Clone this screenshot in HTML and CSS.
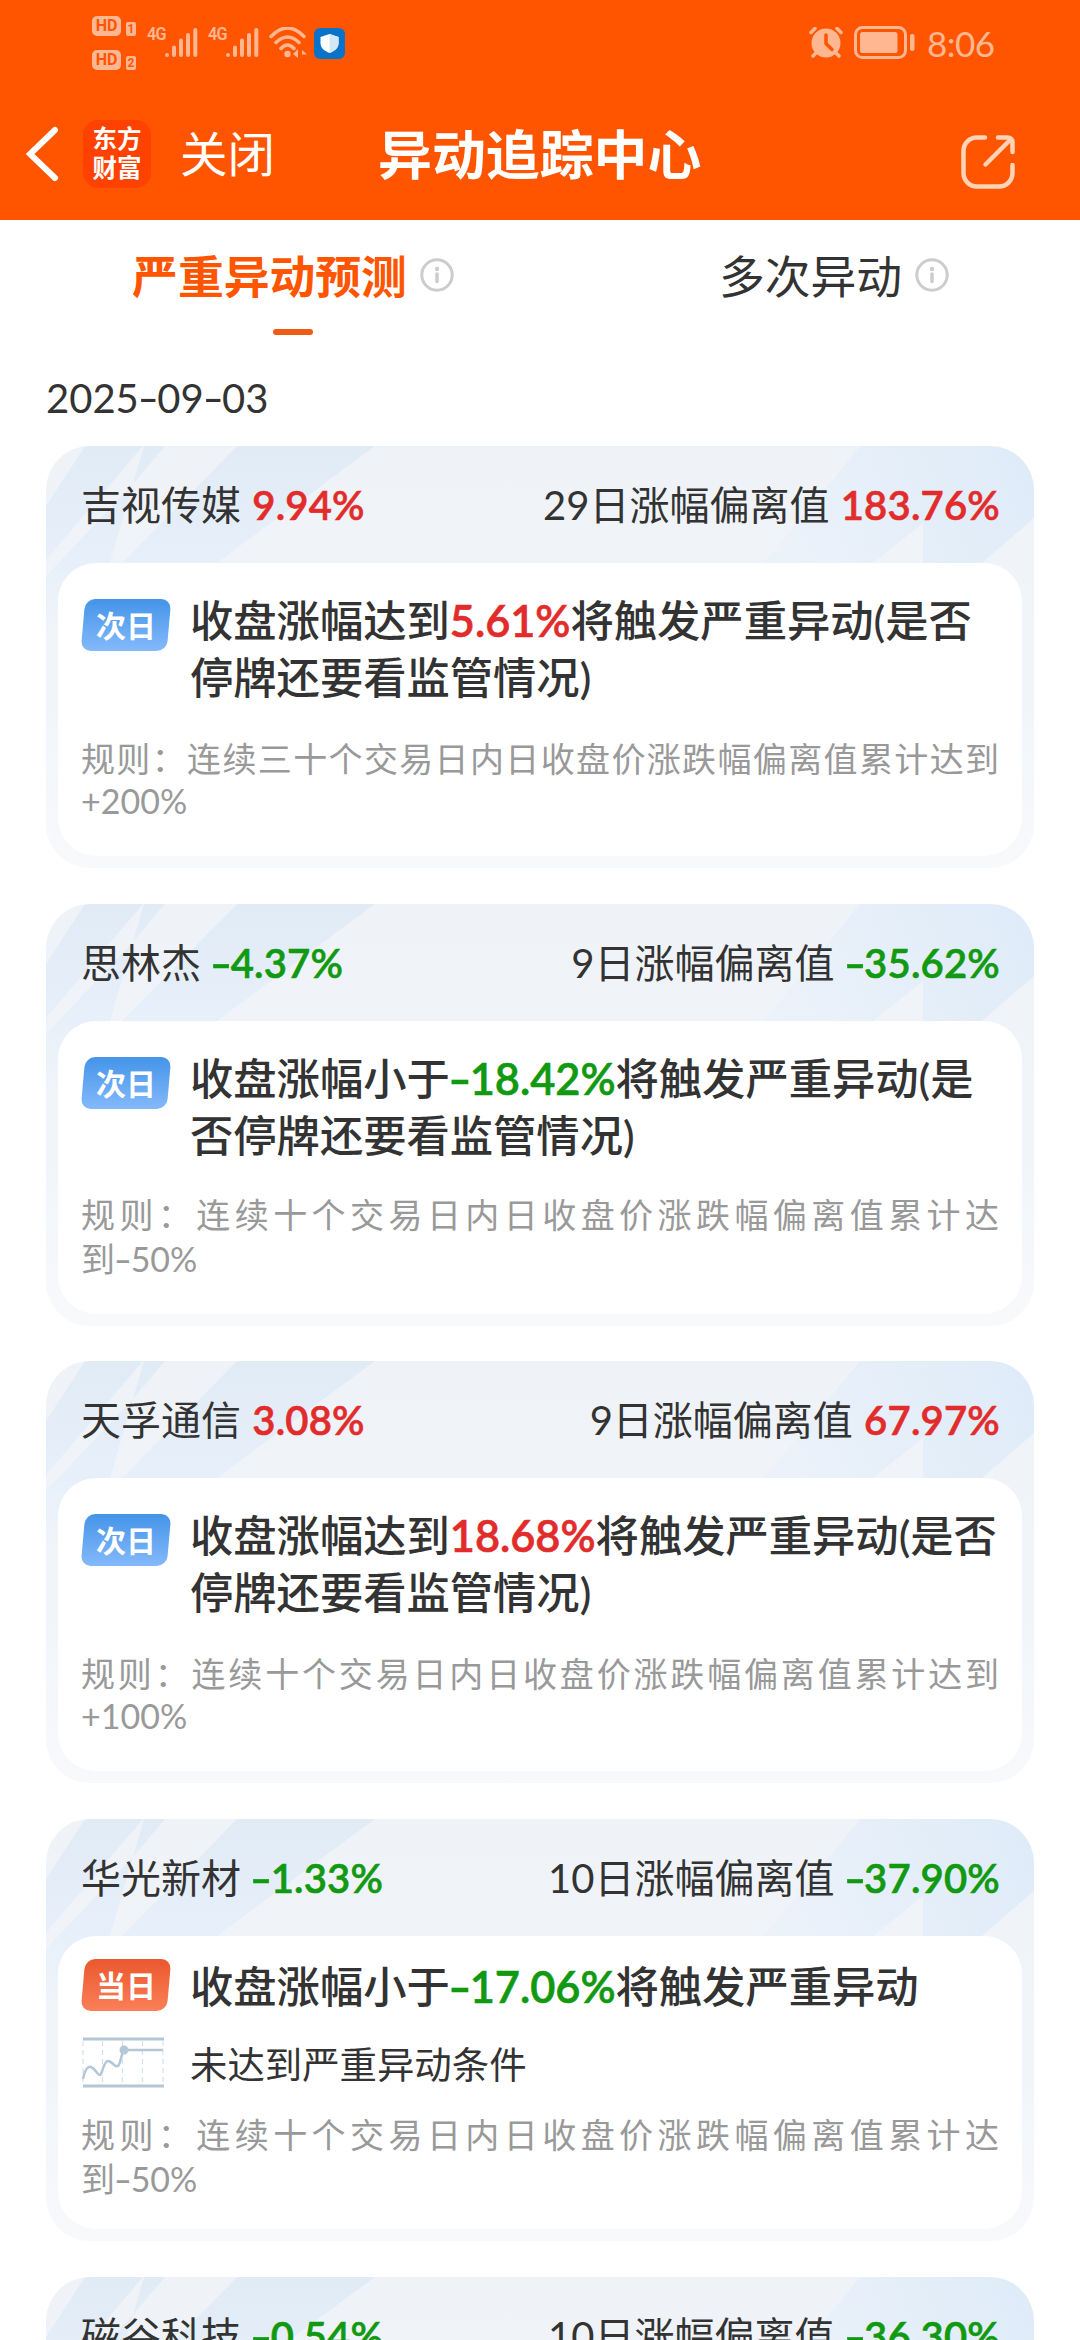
FILE: index.html
```html
<!DOCTYPE html>
<html lang="zh-CN">
<head>
    <meta charset="UTF-8">
    <meta name="viewport" content="width=device-width, initial-scale=1.0">
    <title>异动追踪中心</title>
    <link rel="stylesheet" href="styles.css">
</head>
<body>

    <header class="header">
        <div class="status-bar">
            <div class="status-left">
                <div class="hd-list">
                    <div class="hd"><span class="hd-box">HD</span><span class="sim">1</span></div>
                    <div class="hd"><span class="hd-box">HD</span><span class="sim">2</span></div>
                </div>
                <div class="signal">
                    <span class="net">4G</span>
                    <svg width="34" height="32" viewBox="0 0 34 32" stroke="#ffb792" stroke-width="4" stroke-linecap="round">
                        <path d="M3 28v0M10 20.500v7.500M17 13.500v14.500M24 8v20M31.300 3v25"/>
                    </svg>
                </div>
                <div class="signal">
                    <span class="net">4G</span>
                    <svg width="34" height="32" viewBox="0 0 34 32" stroke="#ffb792" stroke-width="4" stroke-linecap="round">
                        <path d="M3 28v0M10 20.500v7.500M17 13.500v14.500M24 8v20M31.300 3v25"/>
                    </svg>
                </div>
                <svg class="wifi" width="38" height="32" viewBox="0 0 38 32" fill="none" stroke="#ffb792" stroke-width="3.500" stroke-linecap="round">
                    <path d="M2 9.500Q18.500-7.500 35 9.500M7 15.500q11.500-11 23 0M12 21.500q6.500-7 13 0"/>
                    <circle cx="18.500" cy="27" r="3.200" fill="#ffb792" stroke="none"/>
                    <path d="M24 27l5-5v9M33 31v-8l5 4.500h-5" fill="#ffb792" stroke="none"/>
                </svg>
                <svg class="shield" width="31" height="31" viewBox="0 0 31 31">
                    <rect width="31" height="31" rx="6" fill="#0b72c9"/>
                    <path d="M15.500 6l9 3v6.500c0 4.500-4 7.500-9 9.500-5-2-9-5-9-9.500V9z" fill="#fff"/>
                    <path d="M15.500 6v19c5-2 9-5 9-9.500V9z" fill="#d3e8f5"/>
                </svg>
            </div>
            <div class="status-right">
                <svg width="34" height="32" viewBox="0 0 34 32" stroke-linecap="round">
                    <circle cx="17" cy="16" r="14.500" fill="#ffb792"/>
                    <path d="M2 5.500l4-4M32 5.500l-4-4M7 26l-3 3M27 26l3 3" stroke="#ffb792" stroke-width="3.500"/>
                    <path d="M17 8v8.500l6 6" fill="none" stroke="#ff5500" stroke-width="3.500"/>
                </svg>
                <svg class="battery" width="61" height="34" viewBox="0 0 61 34">
                    <rect x="1.500" y="1.500" width="50" height="30" rx="7" fill="none" stroke="#ffb792" stroke-width="3"/>
                    <rect x="6" y="6" width="37.500" height="21" rx="2.500" fill="#ffb792"/>
                    <rect x="56" y="8" width="4.500" height="17" rx="2" fill="#ffb792"/>
                </svg>
                <span class="time">8:06</span>
            </div>
        </div>
        <div class="nav">
            <svg class="back" width="34" height="56" viewBox="0 0 34 56" fill="none" stroke="#fff" stroke-width="6" stroke-linecap="round">
                <path d="M29 4L4 28l25 24"/>
            </svg>
            <div class="logo">东方<br>财富</div>
            <span class="close">关闭</span>
            <h1 class="title">异动追踪中心</h1>
            <svg class="share" width="54" height="54" viewBox="0 0 54 54" fill="none" stroke="#ffd3b5" stroke-width="4.500" stroke-linecap="round" stroke-linejoin="round">
                <path d="M24 2.500h-8A13.500 13.500 0 0 0 2.500 16v22A13.500 13.500 0 0 0 16 51.500h22A13.500 13.500 0 0 0 51.500 38v-8"/>
                <path d="M37 2.500h9q5.500 0 5.500 5.500v9M49 5L24.500 29.500"/>
            </svg>
        </div>
    </header>

    <nav class="tabs">
        <div class="tab active">
            <span>严重异动预测</span>
            <svg class="info" width="34" height="34" viewBox="0 0 34 34">
                <circle cx="17" cy="17" r="15.200" fill="none" stroke="#ccc" stroke-width="3"/>
                <path d="M17 16v7.500" stroke="#ccc" stroke-width="3.500" stroke-linecap="round"/>
                <circle cx="17" cy="11" r="2.200" fill="#ccc"/>
            </svg>
        </div>
        <div class="tab">
            <span>多次异动</span>
            <svg class="info" width="34" height="34" viewBox="0 0 34 34">
                <circle cx="17" cy="17" r="15.200" fill="none" stroke="#ccc" stroke-width="3"/>
                <path d="M17 16v7.500" stroke="#ccc" stroke-width="3.500" stroke-linecap="round"/>
                <circle cx="17" cy="11" r="2.200" fill="#ccc"/>
            </svg>
        </div>
    </nav>

    <div class="date">2025<i>-</i>09<i>-</i>03</div>

    <main class="list">
        <section class="card">
            <div class="card-head">
                <span>吉视传媒 <b class="up">9.94%</b></span>
                <span>29日涨幅偏离值 <b class="up">183.76%</b></span>
            </div>
            <div class="card-body">
                <div class="row">
                    <span class="tag">次日</span>
                    <p class="text">收盘涨幅达到<b class="up">5.61%</b>将触发严重异动(是否<br>停牌还要看监管情况)</p>
                </div>
                <p class="rule short">规则：连续三十个交易日内日收盘价涨跌幅偏离值累计达到<wbr><span>+200%</span></p>
            </div>
        </section>

        <section class="card">
            <div class="card-head">
                <span>思林杰 <b class="down"><i>-</i>4.37%</b></span>
                <span>9日涨幅偏离值 <b class="down"><i>-</i>35.62%</b></span>
            </div>
            <div class="card-body">
                <div class="row">
                    <span class="tag">次日</span>
                    <p class="text">收盘涨幅小于<b class="down"><i>-</i>18.42%</b>将触发严重异动(是<br>否停牌还要看监管情况)</p>
                </div>
                <p class="rule">规则：连续十个交易日内日收盘价涨跌幅偏离值累计达<wbr><span>到<i>-</i>50%</span></p>
            </div>
        </section>

        <section class="card">
            <div class="card-head">
                <span>天孚通信 <b class="up">3.08%</b></span>
                <span>9日涨幅偏离值 <b class="up">67.97%</b></span>
            </div>
            <div class="card-body">
                <div class="row">
                    <span class="tag">次日</span>
                    <p class="text">收盘涨幅达到<b class="up">18.68%</b>将触发严重异动(是否<br>停牌还要看监管情况)</p>
                </div>
                <p class="rule short">规则：连续十个交易日内日收盘价涨跌幅偏离值累计达到<wbr><span>+100%</span></p>
            </div>
        </section>

        <section class="card today">
            <div class="card-head">
                <span>华光新材 <b class="down"><i>-</i>1.33%</b></span>
                <span>10日涨幅偏离值 <b class="down"><i>-</i>37.90%</b></span>
            </div>
            <div class="card-body">
                <div class="row">
                    <span class="tag tag-red">当日</span>
                    <p class="text">收盘涨幅小于<b class="down"><i>-</i>17.06%</b>将触发严重异动</p>
                </div>
                <div class="row condition">
                    <svg class="trend" width="89" height="52" viewBox="0 0 89 52" fill="none" stroke="#b4c6d8">
                        <path d="M2 2h81M2 49h81" stroke-width="3"/>
                        <path d="M2 4v44M21.500 4v44M41.500 4v44M61.500 4v44M82 4v44" stroke="#d8e0e9" stroke-width="1.200" stroke-dasharray="5 4"/>
                        <path d="M2 42C4 32 7 29 10 30c5 2 7 9 9 8 3-2 3-13 8-14 4 0 7 7 10 5 3-3 3-12 6-16h39" stroke-width="2.500"/>
                        <circle cx="43" cy="13" r="4.500" fill="#b4c6d8" stroke="none"/>
                    </svg>
                    <p class="sub">未达到严重异动条件</p>
                </div>
                <p class="rule">规则：连续十个交易日内日收盘价涨跌幅偏离值累计达<wbr><span>到<i>-</i>50%</span></p>
            </div>
        </section>

        <section class="card">
            <div class="card-head">
                <span>磁谷科技 <b class="down"><i>-</i>0.54%</b></span>
                <span>10日涨幅偏离值 <b class="down"><i>-</i>36.30%</b></span>
            </div>
        </section>
    </main>

</body>
</html>
```
FILE: styles.css
```css
* {
    box-sizing: border-box;
    margin: 0;
    padding: 0;
}
body {
    width: 1080px;
    height: 2340px;
    overflow: hidden;
    background: #fff;
    color: #333;
    font-family: Lato, "Noto Sans CJK SC", sans-serif;
}
svg {
    display: block;
    flex: none;
}

/* header */
.header {
    height: 220px;
    background: #ff5500;
    color: #fff;
}
.status-bar {
    display: flex;
    justify-content: space-between;
    height: 90px;
    padding: 0 87px 0 92px;
    color: #ffb792;
}
.status-left, .status-right {
    display: flex;
}
.hd-list {
    width: 55px;
    padding-top: 15px;
}
.hd {
    display: flex;
    align-items: flex-end;
    gap: 5px;
    height: 21px;
    margin-bottom: 13px;
}
.hd-box {
    width: 29px;
    height: 20px;
    border: 2px solid #ffb792;
    border-radius: 5px;
    background: #ffb792;
    color: #ff5500;
    font: bold 16px/16px Roboto, sans-serif;
    text-align: center;
}
.sim {
    width: 10px;
    height: 14px;
    background: #ffb792;
    border-radius: 2px;
    color: #ff5500;
    font: bold 12px/14px Roboto, sans-serif;
    text-align: center;
}
.signal {
    display: flex;
    width: 61px;
    padding-top: 27px;
}
.net {
    width: 17px;
    margin-top: -3px;
    font: 600 19px/19px Roboto, sans-serif;
    letter-spacing: -1px;
    transform: scaleX(0.85);
    transform-origin: left;
}
.wifi {
    margin-top: 27px;
}
.shield {
    margin: 28px 0 0 7px;
}
.status-right svg {
    margin-top: 27px;
}
.status-right .battery {
    margin: 26px 12px 0 11px;
}
.time {
    width: 66px;
    font-size: 35px;
    line-height: 86px;
    letter-spacing: -0.5px;
    white-space: nowrap;
}
.nav {
    display: flex;
    align-items: center;
    height: 127px;
    padding: 0 65px 0 26px;
}
.logo {
    width: 68px;
    height: 68px;
    margin-left: 23px;
    padding-top: 4px;
    border-radius: 15px;
    background: #ff4200;
    font-size: 24.500px;
    font-weight: bold;
    line-height: 29px;
    text-align: center;
}
.close {
    margin-left: 29px;
    font-size: 47.500px;
    line-height: 60px;
}
.title {
    margin-left: 103px;
    font-size: 53.900px;
    line-height: 60px;
}
.share {
    margin: 17px 0 0 auto;
}

/* tabs */
.tabs {
    display: flex;
    height: 137px;
}
.tab {
    position: relative;
    display: flex;
    justify-content: center;
    width: 586px;
    height: 114px;
    font-size: 45.800px;
    line-height: 113px;
}
.tab + .tab {
    width: 494px;
    padding-left: 2px;
}
.active {
    color: #ff5500;
    font-weight: bold;
}
.active::after {
    content: "";
    position: absolute;
    left: 273px;
    bottom: -1px;
    width: 40px;
    height: 6px;
    border-radius: 3px;
    background: #f05a14;
}
.info {
    margin: 38px 0 0 13px;
}
.date {
    height: 89px;
    padding-left: 46px;
    font-size: 40px;
    line-height: 83px;
}

/* wide minus sign */
i {
    display: inline-block;
    width: 0.460em;
    font-style: normal;
    font-weight: 400;
    text-align: center;
    transform: scaleX(1.45);
}
b i {
    font-weight: 600;
}

/* cards */
.list {
    padding: 0 46px;
}
.card {
    height: 422px;
    margin-bottom: 35.700px;
    padding: 0 12px 12px;
    border-radius: 44px;
    background:
        url("data:image/svg+xml,%3Csvg xmlns='http://www.w3.org/2000/svg' width='988' height='180'%3E%3Cdefs%3E%3ClinearGradient id='g' x1='0' y1='0' x2='0' y2='180' gradientUnits='userSpaceOnUse'%3E%3Cstop stop-color='%23e1ebf5'/%3E%3Cstop offset='.65' stop-color='%23e7f0fa'/%3E%3Cstop offset='1' stop-color='%23eff4f9'/%3E%3C/linearGradient%3E%3ClinearGradient id='h' x1='730' y1='117' x2='988' y2='0' gradientUnits='userSpaceOnUse'%3E%3Cstop stop-color='%23ecf2fa'/%3E%3Cstop offset='1' stop-color='%23deebf8'/%3E%3C/linearGradient%3E%3C/defs%3E%3Cg fill='url(%23g)'%3E%3Cpath d='M39 0H97L0 114V60zM98 0H119L87 38zM87 38L64 117 40 180H0V130zM191 0H329L171 117H76z'/%3E%3C/g%3E%3Cpath fill='url(%23h)' d='M814 0H988V72L936 117H877V77L827 117H718z'/%3E%3C/svg%3E") no-repeat,
        linear-gradient(#eff3f8, #f1f5fa 60%, #f8f9fb);
}
.card-head {
    display: flex;
    justify-content: space-between;
    height: 117px;
    padding: 0 22px 0 23px;
    font-size: 40px;
    line-height: 119px;
    white-space: nowrap;
}
.card-head b {
    margin-left: 1px;
    letter-spacing: 0.200px;
}
b {
    font-weight: 600;
    -webkit-text-stroke: 0.6px currentColor;
}
.card-body {
    height: 293px;
    padding: 29px 23px 0 23px;
    border-radius: 38px;
    background: #fff;
}
.up {
    color: #e22c2c;
}
.down {
    color: #119911;
}
.row {
    display: flex;
    gap: 19px;
    height: 114px;
}
.tag {
    position: relative;
    z-index: 0;
    flex: none;
    width: 90px;
    height: 52px;
    margin-top: 7px;
    color: #fff;
    font-size: 30px;
    font-weight: bold;
    line-height: 52px;
    text-align: center;
}
.tag::before {
    content: "";
    position: absolute;
    z-index: -1;
    inset: 0 2px;
    border-radius: 10px;
    background: linear-gradient(#4494e8, #84b9fb);
    transform: skewX(-5deg);
}
.tag-red::before {
    background: linear-gradient(#ea582e, #fb7f58);
}
.text {
    font-size: 43.300px;
    font-weight: 500;
    line-height: 57px;
    white-space: nowrap;
}
.rule {
    margin-top: 29px;
    color: #999;
    font-size: 34px;
    line-height: 44px;
    text-align: justify;
}
.rule span {
    white-space: nowrap;
}
.short {
    margin-top: 32px;
    line-height: 42px;
}
.today .card-body {
    padding-top: 22px;
}
.today .row {
    height: 78px;
}
.today .tag {
    margin-top: 1px;
}
.today .condition {
    height: 52px;
}
.condition .trend {
    margin: 1px 1px 0 0;
}
.sub {
    font-size: 37.400px;
    line-height: 57px;
}
.today .rule {
    margin-top: 25px;
}
```
